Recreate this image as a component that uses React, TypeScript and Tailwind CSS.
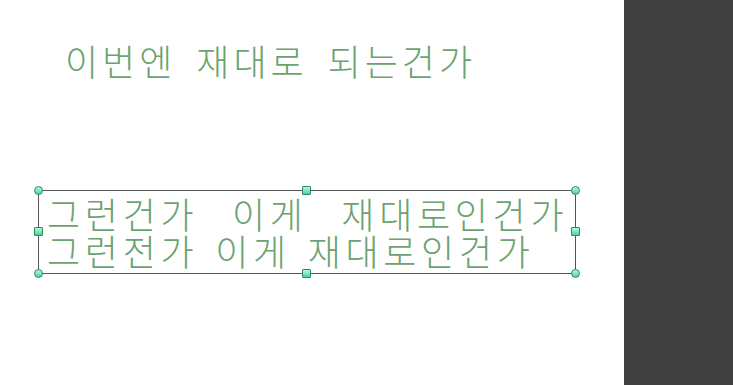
import React from 'react';

const font = { fontFamily: '"Noto Sans CJK KR", "Noto Sans", sans-serif' };

function Handle({ className, round }: { className: string; round?: boolean }) {
  return (
    <span
      className={`absolute w-[9px] h-[9px] border border-[#2b8a5e] bg-gradient-to-b from-[#b5f7dc] to-[#45d39b] ${
        round ? 'rounded-full' : 'rounded-[1px]'
      } ${className}`}
    />
  );
}

export default function App() {
  return (
    <div className="flex w-[733px] h-[385px] bg-white overflow-hidden">
      <div className="flex-1 flex flex-col items-start pl-[38px] pt-[40px]">
        <div
          className="ml-[27px] text-[36px] leading-[40px] font-light text-[#6ba370] whitespace-pre tracking-[4px] [word-spacing:8px]"
          style={font}
        >
          이번엔 재대로 되는건가
        </div>

        <div className="relative mt-[110px] w-[538px] h-[84px] border border-[#555555]">
          <div
            className="flex flex-col pl-[8px] pt-[4px] text-[36px] leading-[37px] font-light text-[#6ba370] whitespace-pre tracking-[4.7px] [word-spacing:4.2px]"
            style={font}
          >
            <span>그런건가  이게  재대로인건가</span>
            <span>그런전가 이게 재대로인건가</span>
          </div>
          <Handle round className="-left-[5px] -top-[5px]" />
          <Handle className="left-[263px] -top-[5px]" />
          <Handle round className="-right-[5px] -top-[5px]" />
          <Handle className="-left-[5px] top-[36px]" />
          <Handle className="-right-[5px] top-[36px]" />
          <Handle round className="-left-[5px] -bottom-[5px]" />
          <Handle className="left-[263px] -bottom-[5px]" />
          <Handle round className="-right-[5px] -bottom-[5px]" />
        </div>
      </div>
      <div className="w-[109px] h-full bg-[#404040]" />
    </div>
  );
}
